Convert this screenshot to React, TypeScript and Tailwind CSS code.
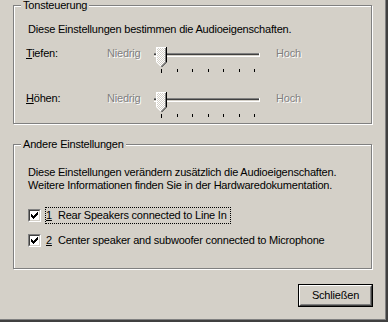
import React from 'react';

const TICKS = [11, 27, 42, 58, 73, 89, 104];

function Slider({ id }: { id: string }) {
  return (
    <svg width={115} height={30} viewBox="0 0 115 30" shapeRendering="crispEdges" className="block">
      <defs>
        <pattern id={`dither-${id}`} width="2" height="2" patternUnits="userSpaceOnUse">
          <rect width="2" height="2" fill="#d4d0c8" />
          <rect x="0" y="0" width="1" height="1" fill="#ffffff" />
          <rect x="1" y="1" width="1" height="1" fill="#ffffff" />
        </pattern>
      </defs>
      {/* channel */}
      <rect x="4" y="8" width="105" height="1" fill="#808080" />
      <rect x="4" y="9" width="105" height="1" fill="#404040" />
      <rect x="4" y="10" width="105" height="1" fill="#d4d0c8" />
      <rect x="4" y="11" width="106" height="1" fill="#ffffff" />
      <rect x="109" y="8" width="1" height="4" fill="#ffffff" />
      {/* ticks */}
      {TICKS.map((x, i) => (
        <rect key={x} x={x} y={24} width={1} height={i === 0 ? 4 : 3} fill="#000" />
      ))}
      {/* thumb */}
      <path d="M6 2 H17 V17 L11.5 22.5 L6 17 Z" fill={`url(#dither-${id})`} shapeRendering="auto" />
      <rect x="6" y="2" width="10" height="1" fill="#fff" />
      <rect x="6" y="2" width="1" height="15" fill="#fff" />
      <rect x="16" y="2" width="1" height="15" fill="#000" />
      <rect x="15" y="3" width="1" height="14" fill="#808080" />
      <path d="M6.5 17 L11 21.5" stroke="#fff" strokeWidth="1" shapeRendering="auto" fill="none" />
      <path d="M16.5 17 L11.5 22" stroke="#000" strokeWidth="1" shapeRendering="auto" fill="none" />
      <path d="M15.5 17 L11.5 21" stroke="#808080" strokeWidth="1" shapeRendering="auto" fill="none" />
    </svg>
  );
}

function Disabled({ children }: { children: React.ReactNode }) {
  return <span className="text-[#808080] [text-shadow:1px_1px_0_#ffffff]">{children}</span>;
}

function SliderRow({ id, letter, rest }: { id: string; letter: string; rest: string }) {
  return (
    <div className="flex items-start h-[45px]">
      <div className="w-[81px] mt-[2px] leading-[13px]">
        <span className="underline">{letter}</span>
        {rest}
      </div>
      <div className="w-[43px] mt-[2px] leading-[13px]">
        <Disabled>Niedrig</Disabled>
      </div>
      <Slider id={id} />
      <div className="ml-[11px] mt-[2px] leading-[13px]">
        <Disabled>Hoch</Disabled>
      </div>
    </div>
  );
}

function CheckBox() {
  return (
    <div className="w-[13px] h-[13px] border border-t-[#808080] border-l-[#808080] border-r-white border-b-white shrink-0">
      <div className="w-full h-full border border-t-[#404040] border-l-[#404040] border-r-[#d4d0c8] border-b-[#d4d0c8] bg-white">
        <svg width={9} height={9} viewBox="0 0 9 9" shapeRendering="crispEdges" className="block">
          <path d="M7 1h1v3h-1zM6 2h1v3h-1zM5 3h1v3h-1zM4 4h1v3h-1zM3 5h1v3h-1zM2 4h1v3h-1zM1 3h1v3h-1z" fill="#000" />
        </svg>
      </div>
    </div>
  );
}

function GroupBox({
  title,
  className,
  children,
}: {
  title: string;
  className: string;
  children: React.ReactNode;
}) {
  return (
    <div
      className={`relative w-[359px] border border-[#808080] [box-shadow:1px_1px_0_#ffffff,inset_1px_1px_0_#ffffff] ${className}`}
    >
      <span className="absolute -top-[7px] left-[7px] px-[2px] bg-[#d4d0c8] leading-[13px]">
        {title}
      </span>
      {children}
    </div>
  );
}

export default function App() {
  return (
    <div className="w-[388px] h-[322px] bg-[#d4d0c8] border-r-2 border-b-2 border-[#404040] text-[11px] tracking-[-0.2px] text-black font-['Liberation_Sans',Arial,sans-serif]">
      <div className="h-full border-r border-b border-[#808080] pl-[13px] pt-[5px]">
        <GroupBox title="Tonsteuerung" className="h-[119px] pl-[12px] pt-[17px]">
          <p className="ml-[2px] leading-[13px]">
            Diese Einstellungen bestimmen die Audioeigenschaften.
          </p>
          <div className="mt-[9px]">
            <SliderRow id="t" letter="T" rest="iefen:" />
            <SliderRow id="h" letter="H" rest="öhen:" />
          </div>
        </GroupBox>

        <GroupBox title="Andere Einstellungen" className="h-[125px] mt-[20px] pl-[14px] pt-[21px]">
          <p className="leading-[13px]">
            Diese Einstellungen verändern zusätzlich die Audioeigenschaften.
            <br />
            Weitere Informationen finden Sie in der Hardwaredokumentation.
          </p>
          <div className="mt-[17px] flex flex-col gap-[12px]">
            <div className="flex items-center h-[13px]">
              <CheckBox />
              <div className="ml-[4px] h-[17px] w-[186px] border border-dotted border-black leading-[15px] whitespace-nowrap">
                <span className="underline">1</span>
                <span className="ml-[6px]">Rear Speakers connected to Line In</span>
              </div>
            </div>
            <div className="flex items-center h-[13px]">
              <CheckBox />
              <div className="ml-[5px] leading-[15px] whitespace-nowrap">
                <span className="underline">2</span>
                <span className="ml-[6px]">Center speaker and subwoofer connected to Microphone</span>
              </div>
            </div>
          </div>
        </GroupBox>

        <div className="w-[360px] flex justify-end mt-[15px]">
          <button
            type="button"
            className="w-[75px] h-[23px] border border-black bg-[#d4d0c8] p-0"
          >
            <div className="w-full h-full border border-t-white border-l-white border-r-[#404040] border-b-[#404040]">
              <div className="w-full h-full border border-t-[#d4d0c8] border-l-[#d4d0c8] border-r-[#808080] border-b-[#808080] flex items-center justify-center leading-[13px]">
                Schließen
              </div>
            </div>
          </button>
        </div>
      </div>
    </div>
  );
}
